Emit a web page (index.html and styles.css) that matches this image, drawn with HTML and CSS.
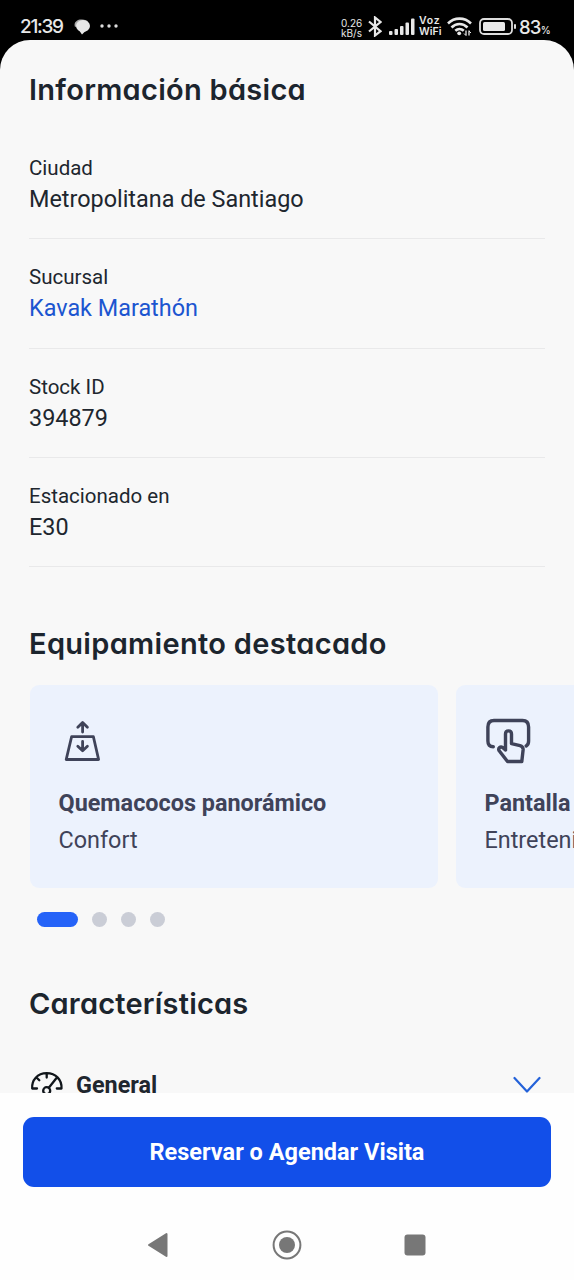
FILE: index.html
```html
<!DOCTYPE html>
<html lang="es">
<head>
<meta charset="utf-8">
<title>Información básica</title>
<link rel="stylesheet" href="styles.css">
</head>
<body>
<header class="status">
  <span class="clock">21:39</span>
  <svg class="chat" width="17" height="16" viewBox="0 0 17 16"><path d="M1 8C-1 3 4 0 8 .5c3 0 5 1 6 2" fill="#aaa"/><ellipse cx="9" cy="7" rx="7" ry="5.900" fill="#e8e8e8"/><path d="M4.500 10.500L8 15.500l4-4z" fill="#e8e8e8"/></svg>
  <svg class="more" width="18" height="4" viewBox="0 0 18 4" fill="#ddd"><circle cx="2" cy="2" r="1.700"/><circle cx="9" cy="2" r="1.700"/><circle cx="16" cy="2" r="1.700"/></svg>
  <span class="speed"><span>0.26</span><span>kB/s</span></span>
  <svg class="bt" width="14" height="21" viewBox="0 0 14 21" fill="none" stroke="#e8e8e8" stroke-width="2.200"><path d="M1 5.500l11.500 9.700L7 19.500v-18L12.500 6 1 15.500"/></svg>
  <svg class="signal" width="26" height="17" viewBox="0 0 26 17" fill="#e8e8e8"><rect x="0" y="13" width="3.500" height="4" rx="1"/><rect x="5.500" y="11" width="3.500" height="6" rx="1"/><rect x="11" y="8" width="3.500" height="9" rx="1"/><rect x="16.500" y="4.500" width="3.500" height="12.500" rx="1"/><rect x="22" y="0.500" width="3.500" height="16.500" rx="1"/></svg>
  <span class="voz"><span class="vo">Voz</span><span>WiFi</span></span>
  <svg class="wifi" width="25" height="19" viewBox="0 0 25 19" fill="none" stroke="#e8e8e8" stroke-width="2.600"><path d="M1 6.500c6.500-6.500 16.500-6.500 23 0M4.500 10.500c4.500-4.700 11.500-4.700 16 0M8.300 13.800c2.500-2.400 6-2.400 8.500 0"/><circle cx="12.200" cy="16.300" r="1.900" fill="#e8e8e8" stroke="none"/><path d="M19 13.500v5M22 13.500v5" stroke-width="1.300"/><path d="M17 16.500l2 2M22 14l2 2" stroke-width="1"/></svg>
  <svg class="battery" width="38" height="17" viewBox="0 0 38 17"><rect x="1" y="1" width="32" height="15" rx="4" fill="none" stroke="#ddd" stroke-width="1.800"/><rect x="4" y="4" width="22" height="9" rx="1.500" fill="#e8e8e8"/><rect x="35" y="6" width="2" height="5" rx="1" fill="#ddd"/></svg>
  <span class="pct">83<small>%</small></span>
</header>
<main class="sheet">
  <h2 class="title title-info">Información básica</h2>
  <dl class="details">
    <div class="detail"><dt>Ciudad</dt><dd>Metropolitana de Santiago</dd></div>
    <div class="detail"><dt>Sucursal</dt><dd class="link">Kavak Marathón</dd></div>
    <div class="detail"><dt>Stock ID</dt><dd>394879</dd></div>
    <div class="detail"><dt>Estacionado en</dt><dd>E30</dd></div>
  </dl>
  <h2 class="title title-equip">Equipamiento destacado</h2>
  <div class="cards">
    <article class="card">
      <svg width="48" height="48" viewBox="0 0 48 48" fill="none" stroke="#3f4359" stroke-width="2.800" stroke-linecap="round" stroke-linejoin="round"><path d="M12.600 20.700h21.800l5.200 22.800H7.200zM23.600 16V6.700M18.800 11.200l4.800-4.800 4.800 4.800M23.600 25.500v8.700M18.800 30.200l4.800 4.600 4.800-4.600"/></svg>
      <h3>Quemacocos panorámico</h3>
      <p>Confort</p>
    </article>
    <article class="card">
      <svg width="48" height="48" viewBox="0 0 48 48" fill="none" stroke="#3f4359" stroke-width="3.400" stroke-linecap="round" stroke-linejoin="round"><path d="M8.300 30.700C4.500 30.700 2.900 28.800 2.900 25V11C2.900 6.700 4.800 4.500 9 4.500h28.500c4.200 0 6.100 2.200 6.100 6.500v14c0 2.500-.7 4-2.400 5"/><path d="M20.500 34V18c0-4.200 6-4.200 6 0v9.700l8.500 1.900c2.300.6 3.300 2 3.100 4.300L36.800 45.500H22.500l-8.300-10.700c-1.500-2.700 1.200-4.600 3.400-3.300l2.900 2.500"/></svg>
      <h3>Pantalla</h3>
      <p>Entretenimiento</p>
    </article>
  </div>
  <div class="dots"><i class="on"></i><i></i><i></i><i></i></div>
  <h2 class="title title-feat">Características</h2>
  <div class="section">
    <svg width="34" height="30" viewBox="0 0 34 30" fill="none" stroke="#11161b" stroke-width="2.300" stroke-linecap="round" stroke-linejoin="round"><path d="M7 17.500H2.200C1.500 9 7.500 2.200 16.700 2.200S32 9 31.500 17.500h-4.700M16.700 2.500v4M6.500 6.500l2.800 2.800M26.500 7l-7.700 9.800"/><circle cx="16.700" cy="19.700" r="3.500"/></svg>
    <h3>General</h3>
    <svg class="chev" width="28" height="18" viewBox="0 0 28 18" fill="none" stroke="#2462d9" stroke-width="2.200" stroke-linecap="round" stroke-linejoin="round"><path d="M1.500 2L14 15.500 26.500 2"/></svg>
  </div>
</main>
<footer class="bottom">
  <button class="cta">Reservar o Agendar Visita</button>
  <nav class="nav">
    <svg width="22" height="26" viewBox="0 0 22 26"><path d="M2 13L19.500 2v22z" fill="#777" stroke="#777" stroke-width="2" stroke-linejoin="round"/></svg>
    <svg width="30" height="30" viewBox="0 0 30 30"><circle cx="15" cy="15" r="13.400" fill="none" stroke="#777" stroke-width="2"/><circle cx="15" cy="15" r="8" fill="#777"/></svg>
    <svg width="22" height="22" viewBox="0 0 22 22"><rect x=".5" y=".5" width="21" height="21" rx="3" fill="#777"/></svg>
  </nav>
</footer>
</body>
</html>
```
FILE: styles.css
```css
* { box-sizing: border-box; margin: 0; padding: 0; }
body { width: 574px; height: 1280px; display: flex; flex-direction: column; background: #000; font-family: Roboto, sans-serif; color: #20262e; overflow: hidden; }
.status { height: 40px; flex: none; display: flex; align-items: flex-start; padding-left: 20px; color: #e8e8e8; white-space: nowrap; }
.status > * { flex: none; }
.clock { width: 54px; margin-top: 16px; font-size: 19px; line-height: 22px; letter-spacing: -1.300px; font-family: Inter, sans-serif; font-weight: 500; }
.chat { margin-top: 19px; }
.more { margin: 24px 0 0 9px; }
.speed { display: flex; flex-direction: column; width: 28px; margin: 18px 0 0 223px; font-family: Inter, sans-serif; font-size: 10px; line-height: 10px; }
.bt { margin: 16px 0 0 -1px; }
.signal { margin: 18px 0 0 7px; }
.voz { display: flex; flex-direction: column; width: 28px; margin: 15px 0 0 4px; font-family: Inter, sans-serif; font-size: 10.500px; font-weight: 600; line-height: 11px; }
.vo { letter-spacing: .8px; }
.wifi { margin: 17px 0 0 0; }
.battery { margin: 18px 0 0 7px; }
.pct { margin: 16px 0 0 2px; font-family: Inter, sans-serif; font-size: 18.500px; font-weight: 500; line-height: 22px; letter-spacing: -.8px; }
.pct small { font-size: 10px; }
.sheet { flex: none; height: 1053px; overflow: hidden; background: #f8f8f8; border-radius: 30px 30px 0 0; }
.title { margin-left: 29px; height: 36px; line-height: 36px; font-family: Inter, sans-serif; font-feature-settings: "cv11" 1; font-size: 29px; font-weight: 600; white-space: nowrap; color: #1c252e; }
.title-info { margin-top: 32px; letter-spacing: .28px; }
.title-equip { margin-top: 59px; letter-spacing: .32px; }
.title-feat { margin-top: 59px; letter-spacing: .2px; }
.details { margin: 22px 29px 0; }
.detail { height: 109.330px; padding-top: 26px; border-bottom: 1px solid #e9e9ea; }
.detail dt { font-size: 20.500px; line-height: 24px; }
.detail dd { margin-top: 5px; font-size: 23.400px; line-height: 28px; }
.detail .link { color: #1c55d0; }
.cards { display: flex; gap: 18px; margin: 23px 0 0 29.500px; height: 203px; }
.card { flex: none; width: 408px; padding: 31px 29px; border-radius: 9px; background: #ecf2fd; color: #3f4359; }
.card svg { display: block; }
.card h3 { margin-top: 25px; font-size: 23.400px; line-height: 28px; font-weight: 700; white-space: nowrap; }
.card p { margin-top: 9px; font-size: 23.400px; line-height: 28px; }
.dots { display: flex; gap: 14.300px; margin: 24px 0 0 36.500px; height: 15px; }
.dots i { width: 15px; height: 15px; border-radius: 8px; background: #cacdd6; }
.dots .on { width: 41px; background: #2563f8; }
.section { display: flex; align-items: flex-start; margin: 49px 33px 0 30px; }
.section h3 { margin-left: 12px; font-size: 23.400px; line-height: 28px; font-weight: 700; }
.section .chev { margin: 5px 0 0 auto; }
.bottom { flex: 1; background: #fefefe; padding: 24px 23px 0; }
.cta { display: block; width: 528px; height: 70px; border: 0; border-radius: 11px; background: #124fe9; color: #fff; font: 700 23.500px/70px Roboto, sans-serif; }
.nav { display: flex; align-items: center; justify-content: space-between; height: 30px; margin: 43px 125px 0 124px; }
```
